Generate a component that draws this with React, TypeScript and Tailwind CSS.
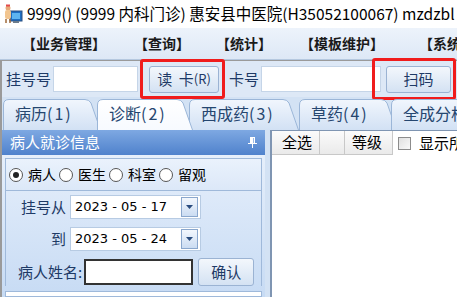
import React from "react";

const cjk = "font-['Noto_Sans_CJK_SC','Noto_Sans',sans-serif]";

function AppIcon() {
  return (
    <svg width="20" height="20" viewBox="0 0 20 20">
      <rect x="7" y="7" width="12" height="10" fill="#1d6fc4" stroke="#2a4f80" strokeWidth="1" />
      <rect x="9" y="9" width="8" height="6" fill="#5db4f0" />
      <rect x="10" y="17" width="6" height="2" fill="#6b7b8c" />
      <circle cx="5" cy="4" r="2.5" fill="#e7a979" />
      <rect x="2" y="6" width="6" height="9" rx="2" fill="#f2c58f" />
      <path d="M3 15 L3 19 M7 15 L7 19" stroke="#a06a3a" strokeWidth="1.5" />
      <rect x="3" y="0.5" width="4" height="2" fill="#e24a4a" />
    </svg>
  );
}

function Tab({
  label,
  num,
  width,
  active,
  ml,
  id,
}: {
  label: string;
  num: string;
  width: number;
  active?: boolean;
  ml: number;
  id: string;
}) {
  const h = 31;
  const d = `M0.5 ${h} L0.5 6 Q0.5 0.5 6 0.5 L${width - 16} 0.5 Q${width - 12} 0.5 ${width - 10} 4 L${width - 0.5} ${h}`;
  return (
    <div
      className={`relative h-[31px] shrink-0 ${active ? "z-20" : "z-10"}`}
      style={{ width, marginLeft: ml }}
    >
      <svg className="absolute inset-0" width={width} height={h}>
        <defs>
          <linearGradient id={id} x1="0" y1="0" x2="0" y2="1">
            <stop offset="0" stopColor={active ? "#ffffff" : "#f1f6fd"} />
            <stop offset="1" stopColor={active ? "#f7faff" : "#d2e1f4"} />
          </linearGradient>
        </defs>
        <path d={d} fill={`url(#${id})`} stroke="#9bb6d8" strokeWidth="1" />
      </svg>
      <span className="relative block pl-[12px] pt-[3px] text-[16px] leading-[22px] text-[#25466f]">
        {label}
        <span className="tracking-[2px]">({num})</span>
      </span>
    </div>
  );
}

function DateBox({ value }: { value: string }) {
  return (
    <div className="flex h-[24px] w-[131px] items-center border border-[#b7cbe3] bg-white pl-[4px]">
      <span className="flex-1 font-['DejaVu_Sans',sans-serif] text-[13px] text-black whitespace-pre">
        {value}
      </span>
      <div className="mr-[2px] flex h-[20px] w-[17px] items-center justify-center border border-[#8aa7cd] bg-gradient-to-b from-[#f3f7fd] to-[#cbdcf2]">
        <svg width="7" height="4" viewBox="0 0 7 4">
          <path d="M0 0 H7 L3.5 4 Z" fill="#2a4c7e" />
        </svg>
      </div>
    </div>
  );
}

function Radio({ checked, label }: { checked?: boolean; label: string }) {
  return (
    <div className="flex items-center">
      <span className="flex h-[14px] w-[14px] items-center justify-center rounded-full border border-[#555] bg-white">
        {checked && <span className="h-[6px] w-[6px] rounded-full bg-[#222]" />}
      </span>
      <span className="ml-[5px] text-[14px] text-black">{label}</span>
    </div>
  );
}

export default function App() {
  return (
    <div className={`relative h-[297px] w-[457px] overflow-hidden bg-white ${cjk}`}>
      {/* title bar */}
      <div className="flex h-[28px] items-center pl-[3px] whitespace-nowrap">
        <AppIcon />
        <span className="ml-[4px] text-[15.5px] text-black">
          9999() (9999 内科门诊) 惠安县中医院(H35052100067) mzdzbl
        </span>
      </div>

      {/* menu bar */}
      <div className="flex h-[32px] items-center overflow-hidden border-b border-[#b5c8df] bg-gradient-to-b from-[#edf3fb] to-[#dde8f6] whitespace-nowrap text-[14px] font-bold text-[#1a1a1a]">
        <span className="ml-[22px]">【业务管理】</span>
        <span className="ml-[28px] shrink-0">【查询】</span>
        <span className="ml-[26px] shrink-0">【统计】</span>
        <span className="ml-[28px] shrink-0">【模板维护】</span>
        <span className="ml-[35px] shrink-0">【系统维护】</span>
      </div>

      {/* toolbar */}
      <div className="flex h-[37px] items-center border-l-2 border-t border-[#9a9a9a] bg-[#dde8f6] whitespace-nowrap text-[15px] text-[#1e3a66]">
        <span className="ml-[4px]">挂号号</span>
        <div className="ml-[2px] h-[26px] w-[85px] border border-[#c5d5e8] bg-white" />
        <div className="relative ml-[11px]">
          <button className="flex h-[27px] w-[70px] items-center justify-center rounded-[3px] border border-[#9bb3d3] bg-gradient-to-b from-[#f3f7fc] to-[#d4e2f3] text-[15px] text-[#1e3a66]">
            读&nbsp;&nbsp;卡<span className="text-[13px]">(R)</span>
          </button>
          <div className="absolute -left-[9px] -top-[7px] h-[40px] w-[85px] rounded-[3px] border-[3px] border-[#f01c1c]" />
        </div>
        <span className="ml-[10px]">卡号</span>
        <div className="ml-[2px] h-[26px] w-[120px] border border-[#c5d5e8] bg-white" />
        <div className="relative ml-[5px]">
          <button className="flex h-[27px] w-[65px] items-center justify-center rounded-[3px] border border-[#9bb3d3] bg-gradient-to-b from-[#f3f7fc] to-[#d4e2f3] text-[15px] text-[#1e3a66]">
            扫码
          </button>
          <div className="absolute -left-[14px] -top-[8px] h-[42px] w-[84px] rounded-[3px] border-[3px] border-[#f01c1c]" />
        </div>
      </div>

      {/* tabs */}
      <div className="flex h-[33px] items-end overflow-hidden border-l-2 border-[#9a9a9a] bg-[#d3e2f4] pt-[2px] whitespace-nowrap">
        <Tab id="t1" label="病历" num="1" width={98} ml={1} />
        <Tab id="t2" label="诊断" num="2" width={96} ml={-4} active />
        <Tab id="t3" label="西成药" num="3" width={110} ml={-4} />
        <Tab id="t4" label="草药" num="4" width={98} ml={0} />
        <Tab id="t5" label="全成分析" num="5" width={130} ml={-6} />
      </div>

      {/* content */}
      <div className="flex h-[167px] border-l-2 border-[#9a9a9a] bg-[#d3e2f4]">
        {/* left panel */}
        <div className="flex w-[263px] shrink-0 flex-col">
          <div className="flex h-[25px] items-center justify-between bg-gradient-to-b from-[#7ea8e2] to-[#4f82cc] pl-[8px] pr-[8px]">
            <span className="text-[15px] text-white">病人就诊信息</span>
            <svg width="9" height="11" viewBox="0 0 9 11">
              <path d="M2 0 H7 V6 H9 V7 H5 V11 H4 V7 H0 V6 H2 Z" fill="#ffffff" />
              <rect x="5" y="1" width="1" height="5" fill="#9dbbe6" />
            </svg>
          </div>
          <div className="flex flex-1 flex-col bg-gradient-to-b from-[#e6effb] to-[#c7dbf4] px-[3px] pt-[3px]">
            <div className="flex h-[33px] items-center gap-[3px] border border-[#9fb9da] bg-gradient-to-b from-[#eaf2fc] to-[#dce8f8] pl-[3px]">
              <Radio checked label="病人" />
              <Radio label="医生" />
              <Radio label="科室" />
              <Radio label="留观" />
            </div>
            <div className="flex flex-col border-x border-[#9fb9da] pt-[3px] whitespace-nowrap">
              <div className="flex h-[26px] items-center">
                <span className="w-[60px] text-right text-[15px] text-[#1e3a66]">挂号从</span>
                <div className="ml-[4px]">
                  <DateBox value="2023 - 05 - 17" />
                </div>
              </div>
              <div className="mt-[6px] flex h-[26px] items-center">
                <span className="w-[60px] text-right text-[15px] text-[#1e3a66]">到</span>
                <div className="ml-[4px]">
                  <DateBox value="2023 - 05 - 24" />
                </div>
              </div>
              <div className="mt-[6px] flex h-[28px] items-center">
                <span className="ml-[12px] shrink-0 text-[15px] text-[#1e3a66]">病人姓名:</span>
                <div className="ml-[2px] h-[26px] w-[109px] shrink-0 border-2 border-[#333] bg-white" />
                <button className="ml-[5px] flex h-[28px] w-[56px] shrink-0 items-center justify-center rounded-[3px] border border-[#9bb3d3] bg-gradient-to-b from-[#f3f7fc] to-[#d4e2f3] text-[15px] text-[#1e3a66]">
                  确认
                </button>
              </div>
            </div>
            <div className="mt-[5px] flex-1 border border-[#9fb9da] bg-white" />
          </div>
        </div>
        {/* right panel */}
        <div className="ml-[5px] flex min-w-0 flex-1 flex-col overflow-hidden border-l-2 border-t border-[#7f95b2] bg-white">
          <div className="flex h-[24px] items-stretch whitespace-nowrap bg-[#f0f0f0] text-[15px] text-black">
            <div className="flex w-[48px] shrink-0 items-center border-r border-b border-[#c8c8c8] bg-gradient-to-b from-[#fbfbfb] to-[#eaeaea] pl-[10px]">全选</div>
            <div className="w-[25px] shrink-0 border-r border-b border-[#c8c8c8] bg-gradient-to-b from-[#fbfbfb] to-[#eaeaea]" />
            <div className="flex w-[48px] shrink-0 items-center border-r border-b border-[#c8c8c8] bg-gradient-to-b from-[#fbfbfb] to-[#eaeaea] pl-[7px]">等级</div>
            <div className="flex shrink-0 items-center bg-white pl-[5px]">
              <span className="h-[13px] w-[13px] border border-[#8c8c8c] bg-gradient-to-br from-[#e0e0e0] to-[#fafafa]" />
              <span className="ml-[8px]">显示所有</span>
            </div>
          </div>
          <div className="flex-1 bg-white" />
        </div>
      </div>
    </div>
  );
}
